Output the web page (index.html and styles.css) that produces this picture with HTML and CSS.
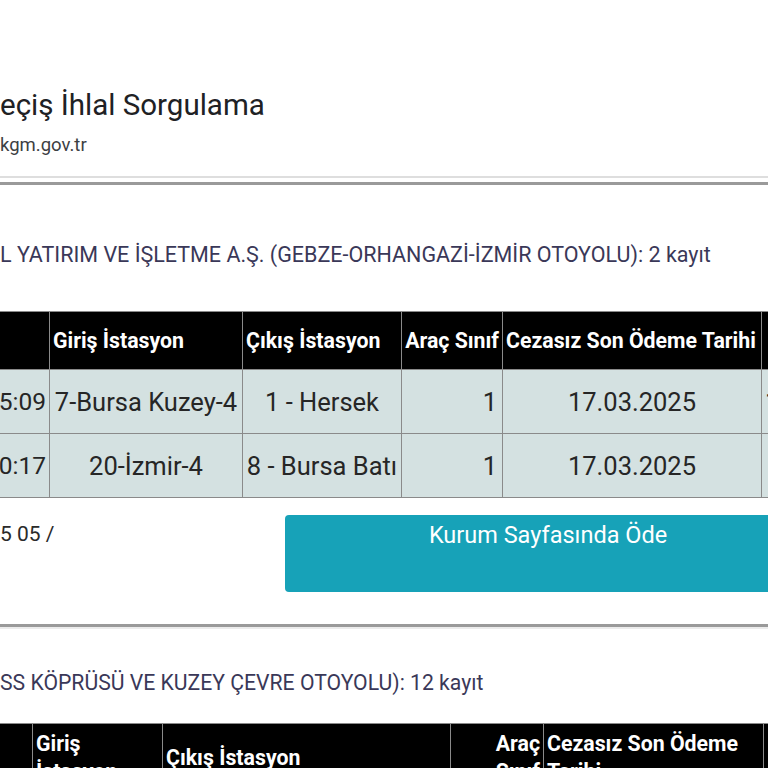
FILE: index.html
```html
<!DOCTYPE html>
<html lang="tr">
<head>
<meta charset="utf-8">
<title>Geçiş İhlal Sorgulama</title>
<link rel="stylesheet" href="styles.css">
</head>
<body>
<div class="screen">
  <header class="page-head">
    <h1 class="title">eçiş İhlal Sorgulama</h1>
    <div class="domain">kgm.gov.tr</div>
  </header>
  <div class="rule-light"></div>
  <div class="rule-dark"></div>

  <section class="company company-a">
    <h2 class="company-name">L YATIRIM VE İŞLETME A.Ş. (GEBZE-ORHANGAZİ-İZMİR OTOYOLU): 2 kayıt</h2>
    <table class="fines fines-a">
      <colgroup>
        <col class="c-time"><col class="c-in"><col class="c-out"><col class="c-class"><col class="c-date"><col class="c-rest">
      </colgroup>
      <thead>
        <tr><th></th><th>Giriş İstasyon</th><th>Çıkış İstasyon</th><th class="num">Araç Sınıf</th><th>Cezasız Son Ödeme Tarihi</th><th></th></tr>
      </thead>
      <tbody>
        <tr><td class="time">5:09</td><td>7-Bursa Kuzey-4</td><td>1 - Hersek</td><td class="num">1</td><td>17.03.2025</td><td class="rest">1</td></tr>
        <tr><td class="time">0:17</td><td>20-İzmir-4</td><td>8 - Bursa Batı</td><td class="num">1</td><td>17.03.2025</td><td class="rest"></td></tr>
      </tbody>
    </table>
    <div class="pay-row">
      <span class="pay-note">5 05 /</span>
      <a class="pay-btn" href="#">Kurum Sayfasında Öde</a>
    </div>
  </section>

  <div class="rule-dark rule-section"></div>

  <section class="company company-b">
    <h2 class="company-name">SS KÖPRÜSÜ VE KUZEY ÇEVRE OTOYOLU): 12 kayıt</h2>
    <table class="fines fines-b">
      <colgroup>
        <col class="b-time"><col class="b-in"><col class="b-out"><col class="b-class"><col class="b-date"><col class="b-rest">
      </colgroup>
      <thead>
        <tr><th></th><th>Giriş İstasyon</th><th>Çıkış İstasyon</th><th class="num">Araç Sınıf</th><th>Cezasız Son Ödeme Tarihi</th><th></th></tr>
      </thead>
    </table>
  </section>
</div>
</body>
</html>
```

FILE: styles.css
```css
html, body {
  margin: 0;
  padding: 0;
  background: #ffffff;
}

.screen {
  width: 768px;
  height: 768px;
  overflow: hidden;
  font-family: Roboto, "Noto Sans", sans-serif;
  padding-top: 88px;
  box-sizing: border-box;
}

.title {
  margin: 0;
  font-size: 29.5px;
  line-height: 34px;
  font-weight: 400;
  color: #202124;
}

.domain {
  margin-top: 11px;
  font-size: 18.5px;
  line-height: 24px;
  color: #3c4043;
}

.rule-light {
  margin-top: 19px;
  height: 2px;
  background: #dedede;
}

.rule-dark {
  margin-top: 4px;
  height: 3px;
  background: #9a9a9a;
}

.rule-section {
  margin-top: 32px;
  box-shadow: 0 2px 0 #ececec;
}

.company-name {
  margin: 0;
  font-size: 21.5px;
  line-height: 26px;
  font-weight: 400;
  color: #3a3858;
  white-space: nowrap;
}

.company-a .company-name {
  margin-top: 57px;
}

.company-b .company-name {
  margin-top: 43px;
  font-size: 21.2px;
}

.fines {
  border-collapse: collapse;
  table-layout: fixed;
  margin-left: -1px;
}

.fines-a {
  margin-top: 43px;
  width: 912px;
}

.fines-b {
  margin-top: 27px;
  width: 912px;
}

.c-time { width: 50px; }
.c-in { width: 193px; }
.c-out { width: 159px; }
.c-class { width: 101px; }
.c-date { width: 259px; }
.c-rest { width: 150px; }

.b-time { width: 33px; }
.b-in { width: 130px; }
.b-out { width: 288px; }
.b-class { width: 93px; }
.b-date { width: 220px; }
.b-rest { width: 148px; }

.fines th,
.fines td {
  border: 1px solid #8a8a8a;
  padding: 0 3px;
  overflow: hidden;
}

.fines th {
  background: #000000;
  color: #ffffff;
  font-weight: 700;
  font-size: 21.3px;
  text-align: left;
  vertical-align: middle;
}

.fines-a th {
  height: 57px;
  white-space: nowrap;
}

.fines-b th {
  height: 68px;
  line-height: 28px;
  padding-top: 0;
  padding-bottom: 0;
}

.fines th.num {
  text-align: right;
}

.fines td {
  background: #d4e1e1;
  color: #262626;
  font-size: 25.5px;
  height: 63px;
  padding: 0 2px;
  text-align: center;
  white-space: nowrap;
}

.fines td.time {
  direction: rtl;
  text-align: right;
  padding-right: 3px;
  font-size: 24.5px;
}

.fines td.num {
  text-align: right;
  padding-right: 5px;
}

.fines td.rest {
  text-align: left;
  padding-left: 3px;
}

.pay-row {
  display: grid;
  grid-template-columns: 285px 526px;
  margin-top: 17px;
  width: 811px;
}

.pay-note {
  padding-top: 6px;
  font-size: 21px;
  line-height: 26px;
  color: #2a2a2a;
}

.pay-btn {
  display: block;
  height: 77px;
  box-sizing: border-box;
  padding-top: 6px;
  background: #17a2b8;
  border-radius: 4px;
  color: #ffffff;
  text-align: center;
  text-decoration: none;
  font-size: 23.5px;
  line-height: 28px;
}
```
